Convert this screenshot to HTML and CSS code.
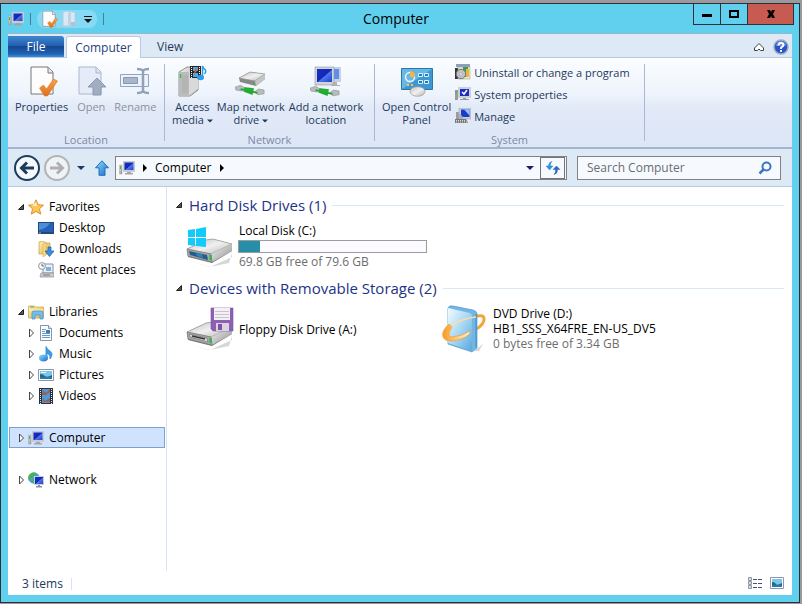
FILE: index.html
```html
<!DOCTYPE html>
<html lang="en">
<head>
<meta charset="utf-8">
<title>Computer</title>
<link rel="stylesheet" href="styles.css">
</head>
<body>
<svg class="defs" aria-hidden="true">
  <defs>
    <linearGradient id="g-screen" x1="0" y1="0" x2="1" y2="1"><stop offset="0" stop-color="#1a2fc0"/><stop offset=".5" stop-color="#1226b8"/><stop offset=".55" stop-color="#4f78ea"/><stop offset="1" stop-color="#2040cc"/></linearGradient>
    <linearGradient id="g-metal" x1="0" y1="0" x2="1" y2="1"><stop offset="0" stop-color="#f4f4f4"/><stop offset="1" stop-color="#8f8f8f"/></linearGradient>
    <linearGradient id="g-top" x1="0" y1="0" x2="1" y2="1"><stop offset="0" stop-color="#bdbdbd"/><stop offset=".5" stop-color="#f0f0f0"/><stop offset="1" stop-color="#b5b5b5"/></linearGradient>
    <linearGradient id="g-orange" x1="0" y1="0" x2="0" y2="1"><stop offset="0" stop-color="#f7a24a"/><stop offset="1" stop-color="#e0701c"/></linearGradient>
    <linearGradient id="g-folder" x1="0" y1="0" x2="1" y2="1"><stop offset="0" stop-color="#fdf0b6"/><stop offset="1" stop-color="#e2b44c"/></linearGradient>
    <linearGradient id="g-blue" x1="0" y1="0" x2="1" y2="1"><stop offset="0" stop-color="#8fe0fb"/><stop offset="1" stop-color="#1769c4"/></linearGradient>
    <linearGradient id="g-case" x1="0" y1="0" x2="1" y2="1"><stop offset="0" stop-color="#f3fbff"/><stop offset=".5" stop-color="#a9d8f4"/><stop offset="1" stop-color="#5ba6dc"/></linearGradient>
    <linearGradient id="g-ring" x1="0" y1="0" x2="1" y2="0"><stop offset="0" stop-color="#f59a24"/><stop offset=".6" stop-color="#fdd48c"/><stop offset="1" stop-color="#fff3dc"/></linearGradient>
    <symbol id="i-computer" viewBox="0 0 16 16"><path d="M.5 5h2.500v9H.5z" fill="url(#g-metal)" stroke="#999" stroke-width=".5"/><path d="M1.500 6v3" stroke="#2dc23a"/><path d="M4 1h12v11H4z" fill="#c8ccd2"/><path d="M5.500 2.500h9v7.500h-9z" fill="url(#g-screen)"/><path d="M8 12h4v1h2v1.500H6V13h2z" fill="#a5a5a5"/></symbol>
    <symbol id="i-properties" viewBox="0 0 32 32"><path d="M5 2h17l5 5v22H5z" fill="#fdfdfe" stroke="#777"/><path d="M22 2v6h5" fill="#e8eaee" stroke="#777"/><path d="M13.500 23l4-3 3 4 7-10 4 2-10 15h-3z" fill="url(#g-orange)" stroke="#d87928" stroke-width=".6"/></symbol>
    <symbol id="i-open" viewBox="0 0 32 32"><path d="M4 2h17l5 5v22H4z" fill="#e6ecf7" stroke="#a9b7d0"/><path d="M21 2v6h5" fill="#dce4f2" stroke="#a9b7d0"/><path d="M22 13l9 9h-5v8h-8v-8h-5z" fill="#a3adc2" stroke="#8b98b2"/></symbol>
    <symbol id="i-rename" viewBox="0 0 32 32"><path d="M1.500 9.500h28v12h-28z" fill="#edf2fa" stroke="#91a4c7"/><path d="M4.500 12.500h14v6h-14z" fill="#a9b5cb" stroke="#8797b7"/><path d="M18 4q5 0 6 2 1-2 6-2M24 6v20M18 28q5 0 6-2 1 2 6 2" fill="none" stroke="#93a0b9" stroke-width="2.500"/></symbol>
    <symbol id="i-cable" viewBox="0 0 32 12"><path d="M0 3l6-2 5 3-4 3-6-1zM21 8l4-3 6 1v4l-7 1z" fill="#b9bcbb" stroke="#8f9492" stroke-width=".7"/><path d="M6 5l18 4M11 4l8 1-1 5-8-3z" fill="#27c43a" stroke="#25a934" stroke-width="2"/></symbol>
    <symbol id="i-media" viewBox="0 0 32 32"><path d="M3 7L11 2h11v23l-8 6H3z" fill="url(#g-metal)" stroke="#929292"/><path d="M3 7h10v24H3z" fill="#bcbcbc"/><path d="M13 7l9-4v21l-9 7z" fill="#d9d9d9"/><path d="M4.500 9v4" stroke="#2bc640" stroke-width="1.500"/><path d="M7 10v18M9 10v18M11 10v18" stroke="#a3a3a3" stroke-width=".6"/><path d="M14 1h11v12H14z" fill="#262626"/><path d="M17 2h5v4h-5zM17 8h5v4h-5z" fill="#4ea7df"/><path d="M19 3l3 2-4 4z" fill="#cf6a3c"/><path d="M15.500 2v11M23.500 2v11" stroke="#fff" stroke-dasharray="1 1"/><path d="M26.500 12V1q1 3 3 4 1 2-1 4" fill="none" stroke="#2b9de8" stroke-width="1.500"/><ellipse cx="24.500" cy="12.500" rx="3.500" ry="2.800" fill="#2b9de8"/></symbol>
    <symbol id="i-mapdrive" viewBox="0 0 32 32"><path d="M4 13l11-6 15 2v5l-9 7-16-4z" fill="#888"/><path d="M4 13l11-6 15 2-10 7z" fill="url(#g-top)" stroke="#8c8c8c" stroke-width=".6"/><path d="M20 16l10-7v5l-9 7z" fill="#c5c5c5"/><path d="M19 17v3" stroke="#32bd3d"/><use href="#i-cable" x="0" y="19" width="30" height="12"/></symbol>
    <symbol id="i-addnet" viewBox="0 0 32 32"><path d="M15 2h16v15H15z" fill="#c5d2e4"/><path d="M16 4h13v10H16z" fill="#5f8ee6"/><path d="M5 2h19v18H5z" fill="#d0d5dd" stroke="#8e98a9" stroke-width=".6"/><path d="M7 4h15v13H7z" fill="url(#g-screen)"/><path d="M23 17h4v3h3v1h-9z" fill="#b0b0b0"/><use href="#i-cable" x="0" y="20" width="30" height="12"/></symbol>
    <symbol id="i-panel" viewBox="0 0 32 32"><path d="M.5 3.500h31v21H.5z" fill="#3e97d0" stroke="#2978ac"/><path d="M1 4h30L1 24z" fill="#67b8e5"/><circle cx="9" cy="12" r="4.500" fill="none" stroke="#e5f6ff" stroke-width="1.500"/><path d="M9 12V6a5 5 0 0 1 5 6z" fill="#ffb044"/><path d="M17.500 8.500h4v3h-4zM23.500 8.500h4v3h-4zM17.500 15.500h4v3h-4zM23.500 15.500h4v3h-4z" fill="#1f7dba" stroke="#d9f2ff"/><path d="M6 20h2M10 20h2" stroke="#ffc35a" stroke-width="2"/><ellipse cx="16.500" cy="26.500" rx="7.500" ry="4.800" fill="url(#g-top)" stroke="#999" stroke-width=".7"/></symbol>
    <symbol id="i-uninstall" viewBox="0 0 16 16"><path d="M1 0h14v3H1z" fill="#8b9fc6"/><path d="M0 4h3v11H0z" fill="#333"/><path d="M3 3h12v12H3z" fill="#f0e6c0" stroke="#999" stroke-width=".5"/><path d="M8 3h5v10H8z" fill="#3f9c46"/><path d="M11 5h3v8h-3z" fill="#e6b83d"/><circle cx="6" cy="10" r="4.700" fill="#bfc1c4" stroke="#777"/><circle cx="6" cy="10" r="1.300" fill="#fff" stroke="#888" stroke-width=".5"/></symbol>
    <symbol id="i-sysprops" viewBox="0 0 16 16"><path d="M0 4h3v10H0z" fill="#9b9b9b"/><path d="M1 5v3" stroke="#30c443"/><path d="M3 1h13v11H3z" fill="#ccd0d8"/><path d="M5 3h9v7H5z" fill="#1b2fbe"/><path d="M7 6l2 2 3-4" fill="none" stroke="#fff" stroke-width="1.500"/><path d="M8 12h3v1h3v1H5v-1h3z" fill="#999"/></symbol>
    <symbol id="i-manage" viewBox="0 0 16 16"><path d="M1 4h3v7H1z" fill="#9b9b9b"/><path d="M4 0h12v11H4z" fill="#ccd0d8" stroke="#999" stroke-width=".5"/><path d="M6 1.500h8.500v7.500H6z" fill="#163dcc"/><path d="M9 1.500h5.500v6z" fill="#9cc1f8"/><path d="M3 4l5 5v2H4z" fill="#a8b0bb"/><path d="M0 11h11l2 4H0z" fill="#777"/><path d="M1 12.500h10M1 14h11" stroke="#ddd" stroke-dasharray="1 1"/></symbol>
    <symbol id="i-star" viewBox="0 0 16 16"><path d="M8 .8l2.100 4.900 5.400.5-4 3.600 1.200 5.400L8 12.400l-4.700 2.800 1.200-5.400-4-3.600 5.400-.5z" fill="#fcc658" stroke="#dd8428" stroke-width=".9"/><path d="M8 3l1 4-5 0z" fill="#fff0bd"/></symbol>
    <symbol id="i-desktop" viewBox="0 0 16 16"><path d="M0 2h16v12H0z" fill="#25477c"/><path d="M1 3h14v9H1z" fill="#2562b6"/><path d="M1 3h11Q8 9 1 10z" fill="#4a8fd8"/><path d="M1 13h2" stroke="#7fd39a"/></symbol>
    <symbol id="i-downloads" viewBox="0 0 16 16"><path d="M1 1l4-1 3 2h4v11H1z" fill="url(#g-folder)" stroke="#cf9f3d" stroke-width=".7"/><path d="M5 3l3-2v13l-3 2z" fill="#f7dc86" stroke="#cf9f3d" stroke-width=".5"/><path d="M10 6h3v4h3l-4.500 5.500L7 10h3z" fill="#3c8fe2" stroke="#1c5cae" stroke-width=".7"/></symbol>
    <symbol id="i-recent" viewBox="0 0 16 16"><path d="M5 2h10v9H5z" fill="#edf1f6" stroke="#8b9099"/><path d="M8 5h5v4H8z" fill="#7fb1e4"/><circle cx="4" cy="4" r="3.400" fill="#f7f9fb" stroke="#8b96a5"/><path d="M4 2v2h2" fill="none" stroke="#445" stroke-width=".8"/><path d="M3 11l13 0v4H2z" fill="#c9cdd2" stroke="#878c94" stroke-width=".7"/><path d="M5 13h7" stroke="#777"/></symbol>
    <symbol id="i-libraries" viewBox="0 0 16 16"><path d="M.5 2h6l1 1h8v11H.5z" fill="url(#g-folder)" stroke="#cda247" stroke-width=".7"/><path d="M2 3h4" stroke="#42b351"/><path d="M1 6h14" stroke="#fff4c5"/><path d="M4 15V9q0-2 2-2h7q2 0 2 2v6h-3v-4H7v4z" fill="#77bdec" stroke="#398fca" stroke-width=".7"/></symbol>
    <symbol id="i-document" viewBox="0 0 16 16"><path d="M2.500.5h8l3 3v12h-11z" fill="#fbfcfe" stroke="#8a95a4"/><path d="M10.500.5v3h3" fill="#dce6f2" stroke="#8a95a4"/><path d="M4 4.500h4M4 6.500h3M4 8.500h8M4 10.500h8M4 12.500h8" stroke="#6b98ca"/><path d="M8 5h4v3H8z" fill="#3d79bb"/></symbol>
    <symbol id="i-music" viewBox="0 0 16 16"><path d="M8 .5q1 3 4 4.500 4 3 0 8 1-4-3-6v5H8z" fill="#369de6" stroke="#278bd5" stroke-width=".8"/><ellipse cx="5.500" cy="12" rx="4.500" ry="3.400" fill="url(#g-blue)"/></symbol>
    <symbol id="i-picture" viewBox="0 0 16 16"><path d="M.5 2.500h15v11H.5z" fill="#fff" stroke="#8d98a6"/><path d="M2 4h12v8H2z" fill="#79c6ef"/><path d="M2 7q3 0 5 2t7-1v4H2z" fill="#2b6a68"/><path d="M2 10h12v2H2z" fill="#2775bd"/><path d="M3 5h5v1H3z" fill="#fff"/></symbol>
    <symbol id="i-video" viewBox="0 0 16 16"><path d="M1 0h14v16H1z" fill="#26323f"/><path d="M4 1h8v14H4z" fill="#4d9bd8"/><path d="M5 2l3 3 4-4v3l-4 3H4zM5 10l2 3 5-3v4H5z" fill="#a35b4b"/><path d="M2.500 1v15M13.500 1v15" stroke="#e6edf2" stroke-dasharray="1 1"/></symbol>
    <symbol id="i-network" viewBox="0 0 16 16"><circle cx="6" cy="6" r="5.700" fill="#4c9fe2"/><path d="M2 2q4-3 6 0l-2 3-3 1-2 3Q-1 5 2 2zM5 7l3 1-1 4-3-2z" fill="#49b34b"/><path d="M6 4h10v9H6z" fill="#c6cede"/><path d="M7 5h8v7H7z" fill="url(#g-screen)"/><path d="M10 13h2v1h2v1.500H8V14h2z" fill="#8091ac"/></symbol>
    <symbol id="i-drive" viewBox="0 0 48 30"><path d="M4 23l20 6 22-10v-4l-3 10-20 4z" fill="#bbb" opacity=".6"/><path d="M1 11L20 2l7-1 19 5v7L26 25 2 19z" fill="#777"/><path d="M1 11L20 2l7-1 19 5-21 10z" fill="url(#g-top)" stroke="#999" stroke-width=".7"/><path d="M25 16L46 6v7L26 24z" fill="url(#g-metal)"/><path d="M1 11l24 5 1 8-24-6z" fill="#a8a8a8" stroke="#777" stroke-width=".6"/><path d="M24.500 17v5" stroke="#1fbe3c" stroke-width="2"/></symbol>
    <symbol id="i-harddisk" viewBox="0 0 48 48"><use href="#i-drive" x="0" y="16" width="48" height="30"/><path d="M3 29l18 4 1 5-18-5z" fill="#235e8b"/><path d="M10 31l6 1 1 4-6-2z" fill="#2f84bb"/><path d="M2 8l7-1v8H2zM10 7l10-2v10H10zM2 16h7v8l-7-1zM10 16h10v9l-10-1z" fill="#12cbfb"/></symbol>
    <symbol id="i-floppy" viewBox="0 0 48 48"><use href="#i-drive" x="0" y="16" width="48" height="30"/><path d="M3 29l18 4 1 4-18-5z" fill="#d8d8d8" stroke="#777" stroke-width=".7"/><path d="M6 31l13 3" stroke="#333" stroke-width="1.500"/><path d="M25 3h22v23H27l-2-2z" fill="#8d60b4" stroke="#78509d" stroke-width=".6"/><path d="M28 3h16v12H28z" fill="#f3f1f7"/><path d="M29 6.500h14M29 9.500h14M29 12.500h14" stroke="#c7c3ce"/><path d="M30 18h13v8H30z" fill="#d8d5de"/><path d="M32 19h4v6h-4z" fill="#7c52a3"/></symbol>
    <symbol id="i-dvd" viewBox="0 0 48 48"><path d="M34 46l9-7-4 7z" fill="#bbb" opacity=".6"/><path d="M33 12q10-3 11 1 1 6-9 12" fill="none" stroke="#f5a437" stroke-width="3"/><path d="M8 3q1-3 5-2l20 4q4 1 4 4v34l-5 4-24-8z" fill="#74b6e2" stroke="#4f9ace" stroke-width=".7"/><path d="M8 3l22 5q2 1 2 3v35L8 38z" fill="url(#g-case)"/><path d="M36 9v33" stroke="#3d8ecb"/><path d="M9 19Q1 26 3 32q3 7 18 2 10-4 9-8-7 5-18 6-6 0 0-10z" fill="url(#g-ring)" stroke="#f4a236" stroke-width=".8"/><path d="M12 20q12-7 24-8" fill="none" stroke="#ffdba8" stroke-width="1.500"/></symbol>
    <symbol id="i-open-tri" viewBox="0 0 8 8"><path d="M6.500 1.500v5h-5z" fill="#555" stroke="#222"/></symbol>
    <symbol id="i-closed-tri" viewBox="0 0 8 8"><path d="M2.500 0v8l4-4z" fill="#fff" stroke="#333" stroke-width=".9"/></symbol>
    <symbol id="i-down" viewBox="0 0 8 8"><path d="M0 2h8L4 6z" fill="currentColor"/></symbol>
    <symbol id="i-right" viewBox="0 0 8 8"><path d="M2 0v8l4-4z" fill="#000"/></symbol>
  </defs>
</svg>

<div class="window">
  <header class="titlebar">
    <div class="quick">
      <svg class="i16"><use href="#i-computer"/></svg>
      <span class="quick-sep"></span>
      <div class="quick-tools">
        <button aria-label="Properties"><svg class="i18"><use href="#i-properties"/></svg></button>
        <button aria-label="New folder"><svg class="i18" viewBox="0 0 18 18"><path d="M2 2l5-1 3 1h4v14H2z" fill="#dce8f4" stroke="#b3cde1"/><path d="M7 2l3 1v13l-3 1z" fill="#bcd4e8"/><path d="M10 12h4v4h-4z" fill="#b5c1d0"/></svg></button>
        <button aria-label="Customize toolbar"><svg class="i12" viewBox="0 0 12 12"><path d="M2 3h8v1H2zM2 6h8L6 10z" fill="#111"/></svg></button>
      </div>
      <span class="quick-sep"></span>
    </div>
    <h1>Computer</h1>
    <div class="caption">
      <button aria-label="Minimize"><svg class="i12" viewBox="0 0 12 12"><path d="M1 6h10v3H1z"/></svg></button>
      <button aria-label="Maximize"><svg class="i12" viewBox="0 0 12 12"><path d="M2 3h8v6H2z" fill="none" stroke="#000" stroke-width="2"/></svg></button>
      <button class="close" aria-label="Close"><svg class="i12" viewBox="0 0 12 12"><path d="M2 2h3l1 2 1-2h3L8 6l2 4H7L6 8l-1 2H2l2-4z"/></svg></button>
    </div>
  </header>

  <div class="content">
    <div class="tabs">
      <button class="tab file">File</button>
      <button class="tab active">Computer</button>
      <button class="tab">View</button>
      <div class="tabs-end">
        <button aria-label="Minimize the ribbon"><svg class="i12" viewBox="0 0 12 12"><path d="M1.500 7L6 2.500 10.500 7v2.500h-3L6 8 4.500 9.500h-3z" fill="#fff" stroke="#444"/></svg></button>
        <button aria-label="Help"><svg class="i16" viewBox="0 0 16 16"><circle cx="8" cy="8" r="7" fill="#2554cc" stroke="#a4adba" stroke-width="1.500"/><path d="M3 7a5 5 0 0 1 10 0z" fill="#668fe8"/><path d="M5.500 6.500q0-2.500 2.500-2.500t2.500 2q0 1.500-2.500 2.500V10M8 11v2" fill="none" stroke="#fff" stroke-width="1.800"/></svg></button>
      </div>
    </div>

    <div class="ribbon">
      <section class="group location">
        <div class="tools">
          <button class="tool"><svg class="i32"><use href="#i-properties"/></svg><span>Properties</span></button>
          <button class="tool off" disabled><svg class="i32"><use href="#i-open"/></svg><span>Open</span></button>
          <button class="tool off" disabled><svg class="i32"><use href="#i-rename"/></svg><span>Rename</span></button>
        </div>
        <h2>Location</h2>
      </section>
      <section class="group network">
        <div class="tools">
          <button class="tool"><svg class="i32"><use href="#i-media"/></svg><span>Access<br>media <svg class="i6"><use href="#i-down"/></svg></span></button>
          <button class="tool"><svg class="i32"><use href="#i-mapdrive"/></svg><span>Map network<br>drive <svg class="i6"><use href="#i-down"/></svg></span></button>
          <button class="tool"><svg class="i32"><use href="#i-addnet"/></svg><span>Add a network<br>location</span></button>
        </div>
        <h2>Network</h2>
      </section>
      <section class="group system">
        <div class="tools">
          <button class="tool"><svg class="i32"><use href="#i-panel"/></svg><span>Open Control<br>Panel</span></button>
          <div class="small-tools">
            <button><svg class="i16"><use href="#i-uninstall"/></svg>Uninstall or change a program</button>
            <button><svg class="i16"><use href="#i-sysprops"/></svg>System properties</button>
            <button><svg class="i16"><use href="#i-manage"/></svg>Manage</button>
          </div>
        </div>
        <h2>System</h2>
      </section>
    </div>

    <div class="addressbar">
      <button aria-label="Back"><svg class="i26" viewBox="0 0 26 26"><circle cx="13" cy="13" r="12" fill="#f4f9fd" stroke="#1d3c5c" stroke-width="2"/><path d="M20 13H8M13 7.500L7.500 13l5.500 5.500" fill="none" stroke="#1d3c5c" stroke-width="3"/></svg></button>
      <button aria-label="Forward"><svg class="i26" viewBox="0 0 26 26"><circle cx="13" cy="13" r="12" fill="#eef3f8" stroke="#b4b4b4" stroke-width="2"/><path d="M6 13h12M13 7.500l5.500 5.500-5.500 5.500" fill="none" stroke="#b0b0b0" stroke-width="3"/></svg></button>
      <button class="recent" aria-label="Recent locations"><svg class="i8"><use href="#i-down"/></svg></button>
      <button class="up" aria-label="Up"><svg class="i16" viewBox="0 0 16 16"><path d="M8 .8l6.500 7H11v7.500H5V7.800H1.500z" fill="url(#g-blue)" stroke="#1f6fc4"/></svg></button>
      <div class="path">
        <svg class="i16"><use href="#i-computer"/></svg>
        <svg class="i8"><use href="#i-right"/></svg>
        <a href="#computer">Computer</a>
        <svg class="i8"><use href="#i-right"/></svg>
        <button class="history" aria-label="Previous locations"><svg class="i8"><use href="#i-down"/></svg></button>
        <button class="refresh" aria-label="Refresh"><svg class="i16" viewBox="0 0 16 16"><path d="M7 1.500Q3.500 2 3.500 6H1l3.500 4L8 6H5.500Q5 3 7 1.500z" fill="#3390dc" stroke="#3390dc" stroke-width=".5"/><path d="M9 14.500q3.500-.5 3.500-5H15L11.500 6 8 9.500h2.500q.5 3-1.500 5z" fill="#3067b4" stroke="#3067b4" stroke-width=".5"/></svg></button>
      </div>
      <label class="search">
        <input type="text" placeholder="Search Computer" aria-label="Search Computer">
        <svg class="i14" viewBox="0 0 14 14"><circle cx="8.500" cy="5.500" r="4" fill="none" stroke="#3c77bb" stroke-width="2"/><path d="M5.500 8.500L1.500 12.500" stroke="#3c77bb" stroke-width="2.500"/></svg>
      </label>
    </div>

    <div class="body">
      <nav>
        <ul>
          <li><a href="#favorites"><svg class="i8"><use href="#i-open-tri"/></svg><svg class="i16"><use href="#i-star"/></svg>Favorites</a>
            <ul>
              <li><a href="#desktop"><span class="i8"></span><svg class="i16"><use href="#i-desktop"/></svg>Desktop</a></li>
              <li><a href="#downloads"><span class="i8"></span><svg class="i16"><use href="#i-downloads"/></svg>Downloads</a></li>
              <li><a href="#recent"><span class="i8"></span><svg class="i16"><use href="#i-recent"/></svg>Recent places</a></li>
            </ul>
          </li>
          <li><a href="#libraries"><svg class="i8"><use href="#i-open-tri"/></svg><svg class="i16"><use href="#i-libraries"/></svg>Libraries</a>
            <ul>
              <li><a href="#documents"><svg class="i8"><use href="#i-closed-tri"/></svg><svg class="i16"><use href="#i-document"/></svg>Documents</a></li>
              <li><a href="#music"><svg class="i8"><use href="#i-closed-tri"/></svg><svg class="i16"><use href="#i-music"/></svg>Music</a></li>
              <li><a href="#pictures"><svg class="i8"><use href="#i-closed-tri"/></svg><svg class="i16"><use href="#i-picture"/></svg>Pictures</a></li>
              <li><a href="#videos"><svg class="i8"><use href="#i-closed-tri"/></svg><svg class="i16"><use href="#i-video"/></svg>Videos</a></li>
            </ul>
          </li>
          <li><a class="selected" href="#computer"><svg class="i8"><use href="#i-closed-tri"/></svg><svg class="i16"><use href="#i-computer"/></svg>Computer</a></li>
          <li><a href="#network"><svg class="i8"><use href="#i-closed-tri"/></svg><svg class="i16"><use href="#i-network"/></svg>Network</a></li>
        </ul>
      </nav>
      <main>
        <section>
          <h2><svg class="i8"><use href="#i-open-tri"/></svg>Hard Disk Drives (1)</h2>
          <div class="items">
            <article>
              <svg class="i48"><use href="#i-harddisk"/></svg>
              <div class="info">
                <label for="usage">Local Disk (C:)</label>
                <progress id="usage" max="100" value="11"></progress>
                <p>69.8 GB free of 79.6 GB</p>
              </div>
            </article>
          </div>
        </section>
        <section>
          <h2><svg class="i8"><use href="#i-open-tri"/></svg>Devices with Removable Storage (2)</h2>
          <div class="items">
            <article>
              <svg class="i48"><use href="#i-floppy"/></svg>
              <div class="info"><span>Floppy Disk Drive (A:)</span></div>
            </article>
            <article>
              <svg class="i48"><use href="#i-dvd"/></svg>
              <div class="info"><span>DVD Drive (D:)<br>HB1_SSS_X64FRE_EN-US_DV5</span><p>0 bytes free of 3.34 GB</p></div>
            </article>
          </div>
        </section>
      </main>
    </div>

    <footer>
      <span class="count">3 items</span>
      <button aria-label="Details view"><svg class="i16" viewBox="0 0 16 16"><path d="M1.500 1.500h3v3h-3zM1.500 5.500h3v3h-3zM1.500 9.500h3v3h-3z" fill="#fff" stroke="#8b98ab"/><path d="M2.500 3h1M2.500 11h1" stroke="#3c9b4b"/><path d="M2.500 7h1" stroke="#c0473a"/><path d="M6 3.500h4M11 3.500h4M6 7.500h4M11 7.500h4M6 11.500h4M11 11.500h4" stroke="#3f5573"/></svg></button>
      <button aria-label="Large icons view"><svg class="i16" viewBox="0 0 16 16"><path d="M1.500 1.500h13v11h-13z" fill="#fff" stroke="#8d98a6"/><path d="M3 3h10v8H3z" fill="#79c6ef"/><path d="M3 6q3 0 4 2t6-1v4H3z" fill="#2b6a68"/><path d="M3 9h10v2H3z" fill="#2775bd"/></svg></button>
    </footer>
  </div>
</div>
</body>
</html>
```
FILE: styles.css
```css
* { box-sizing: border-box; }
body {
  margin: 0;
  background: #9b999c;
  font: 12px/15px "Open Sans", "Noto Sans", sans-serif;
  color: #000;
}
h1, h2, p, ul { margin: 0; padding: 0; font-weight: 400; list-style: none; }
button { margin: 0; padding: 0; border: 0; background: none; font: inherit; color: inherit; }
a { color: inherit; text-decoration: none; }
svg { display: block; flex: none; }
.defs { position: absolute; width: 0; height: 0; }
.i6 { width: 6px; height: 6px; }
.i8 { width: 8px; height: 8px; flex: none; }
.i12 { width: 12px; height: 12px; }
.i14 { width: 14px; height: 14px; }
.i16 { width: 16px; height: 16px; }
.i18 { width: 18px; height: 18px; }
.i26 { width: 26px; height: 26px; }
.i32 { width: 32px; height: 32px; }
.i48 { width: 48px; height: 48px; }

.window {
  display: flex;
  flex-direction: column;
  min-height: calc(100vh - 4px);
  margin: 3px 2px 1px 0;
  padding: 0 7px 7px;
  border: 1px solid #2b3138;
  background: #61cfee;
}
.titlebar {
  display: grid;
  grid-template-columns: 1fr auto 1fr;
  height: 29px;
}
.titlebar h1 { align-self: center; padding-right: 8px; font-size: 14px; line-height: 20px; }
.quick { display: flex; align-items: center; gap: 6px; }
.quick-sep { width: 1px; height: 12px; background: #457e96; }
.quick-tools {
  display: flex;
  align-items: center;
  gap: 3px;
  padding: 0 3px;
  border-radius: 8px;
  background: #86daf3;
}
.caption { display: flex; justify-self: end; align-self: start; margin-right: -2px; border: 1px solid #2b3138; border-top: 0; }
.caption button {
  display: grid;
  place-items: center;
  width: 27px;
  height: 20px;
  border-right: 1px solid #2b3138;
}
.caption .close { width: 45px; border-right: 0; background: #c75b52; }

.content { display: flex; flex: 1; flex-direction: column; background: #fff; }
.tabs {
  display: flex;
  height: 25px;
  padding-top: 2px;
  border-top: 1px solid #97b7cd;
  border-bottom: 1px solid #b9c9df;
  background: #dee9f6;
}
.tab { padding: 0 16px; color: #1e395b; }
.tab.file {
  width: 56px;
  margin-right: 2px;
  border-radius: 0 3px 0 0;
  background: linear-gradient(#3f86cf, #2361b2 45%, #16478f 50%, #1e62b4 85%, #3b8fd6);
  color: #fff;
}
.tab.active {
  width: 75px;
  margin-bottom: -1px;
  padding: 0 0 1px;
  border: 1px solid #b9c9df;
  border-bottom: 0;
  border-radius: 3px 3px 0 0;
  background: #fff;
  color: #1e3f82;
}
.tabs-end { display: flex; align-items: center; gap: 8px; margin-left: auto; padding-right: 3px; }

.ribbon {
  display: flex;
  padding: 6px 0;
  border-bottom: 2px solid #a5b5d1;
  background: linear-gradient(#fbfdff, #eef4fc 40%, #e2eaf8 55%, #dde6f6);
  color: #1e395b;
  font-size: 11px;
}
.group {
  display: flex;
  flex-direction: column;
  justify-content: space-between;
  height: 77px;
  border-right: 1px solid #a8b8d6;
}
.group.location { flex: 0 0 157px; }
.group.network { flex: 0 0 210px; }
.group.system { flex: 0 0 270px; }
.group h2 { margin-bottom: -6px; font-size: 11px; line-height: 15px; text-align: center; color: #7c8aa6; }
.tools { display: flex; padding: 0 7px; gap: 4px; }
.tool { display: flex; flex-direction: column; align-items: center; gap: 3px; padding-top: 1px; line-height: 13px; white-space: nowrap; }
.tool svg.i6 { display: inline-block; vertical-align: middle; }
.tool.off { color: #8d929c; }
.group.location .tools { gap: 7px; }
.small-tools { display: flex; flex-direction: column; align-items: flex-start; margin-top: -3px; }
.small-tools button { display: flex; align-items: center; gap: 3px; height: 22px; white-space: nowrap; }

.addressbar {
  display: flex;
  align-items: center;
  gap: 4px;
  height: 38px;
  padding: 0 11px 0 6px;
  border-bottom: 1px solid #b9cbdf;
  background: #dde9f5;
}
.recent { padding: 0 3px; color: #1d3c5c; }
.up { margin-left: 2px; }
.path {
  display: flex;
  flex: 1;
  align-items: center;
  gap: 6px;
  height: 24px;
  margin-left: 1px;
  padding-left: 3px;
  border: 1px solid #808285;
  background: #f6faff;
}
.history { margin-left: auto; color: #28166a; }
.refresh {
  display: grid;
  place-items: center;
  align-self: stretch;
  width: 25px;
  margin-right: 1px;
  border: 1px solid #727478;
}
.search {
  display: flex;
  align-items: center;
  width: 204px;
  height: 24px;
  margin-left: 6px;
  padding: 0 8px;
  border: 1px solid #808285;
  background: #f6faff;
}
.search input { flex: 1; min-width: 0; padding: 0 1px; border: 0; outline: 0; background: none; font: inherit; }
.search input::placeholder { color: #6b6d70; opacity: 1; }

.body { display: flex; flex: 1; }
nav { flex: 0 0 159px; padding: 9px 1px 0; border-right: 1px solid #d6e5f5; }
nav > ul { display: flex; flex-direction: column; gap: 21px; }
nav a {
  display: flex;
  align-items: center;
  gap: 4px;
  height: 21px;
  padding-left: 7px;
  border: 1px solid transparent;
}
nav ul ul a { padding-left: 17px; }
nav .i8 { margin-right: -1px; }
nav .i16 { margin-right: 1px; }
nav .selected { border-color: #7da2ce; background: #cfe3ff; }

main { flex: 1; padding: 7px 8px 0; }
main h2 {
  display: flex;
  align-items: center;
  gap: 6px;
  font-size: 15px;
  line-height: 22px;
  color: #1e3287;
}
main h2::after { content: ""; flex: 1; height: 1px; background: #dbe7f3; }
.items { display: flex; flex-wrap: wrap; min-height: 61px; padding: 2px 0 0 11px; }
article { display: flex; align-items: center; gap: 5px; flex: 0 0 254px; height: 56px; }
.info { flex: 1; white-space: nowrap; }
.info label { display: block; }
.info p { line-height: 16px; color: #6d6d6d; }
progress {
  display: block;
  width: 189px;
  height: 13px;
  margin: 2px 0 1px -1px;
  border: 1px solid #9c9c9c;
  appearance: none;
  background: #fdfaff;
}
progress::-webkit-progress-bar { background: #fdfaff; }
progress::-webkit-progress-value { background: #268ea6; }

footer { display: flex; align-items: center; gap: 6px; height: 24px; padding: 1px 7px 0 14px; color: #1e395b; }
.count { margin-right: auto; padding-right: 8px; border-right: 1px solid #d6e5f5; line-height: 12px; }
```
